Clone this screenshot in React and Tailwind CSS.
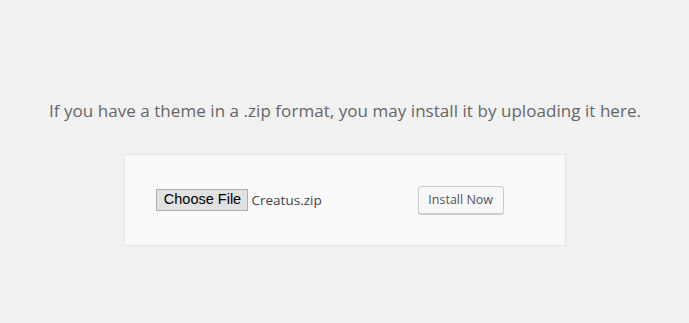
export default function App() {
  return (
    <div className="w-[689px] h-[323px] bg-[#f1f1f1] flex flex-col items-center" style={{ fontFamily: '"Open Sans", "Noto Sans", sans-serif' }}>
      <p className="mt-[98px] ml-[1px] text-[17px] leading-[26px] text-[#666] text-center tracking-[0.05px]">
        If you have a theme in a .zip format, you may install it by uploading it here.
      </p>
      <div className="mt-[30px] w-[442px] h-[92px] bg-[#fafafa] border border-[#e5e5e5] flex items-center pl-[31px]">
        <div className="flex items-center">
          <span className="h-[22px] w-[92px] flex items-center justify-center bg-[#e1e1e1] border border-[#adadad] text-[14.5px] text-black pl-[2px]" style={{ fontFamily: '"Liberation Sans", Arial, sans-serif' }}>
            Choose File
          </span>
          <span className="ml-[4px] text-[13.5px] text-[#444]">Creatus.zip</span>
        </div>
        <button className="ml-[96px] h-[28px] w-[86px] rounded-[3px] bg-[#f7f7f7] border border-[#ccc] shadow-[0_1px_0_#ccc] text-[12.5px] text-[#555] leading-[26px]">
          Install Now
        </button>
      </div>
    </div>
  );
}
